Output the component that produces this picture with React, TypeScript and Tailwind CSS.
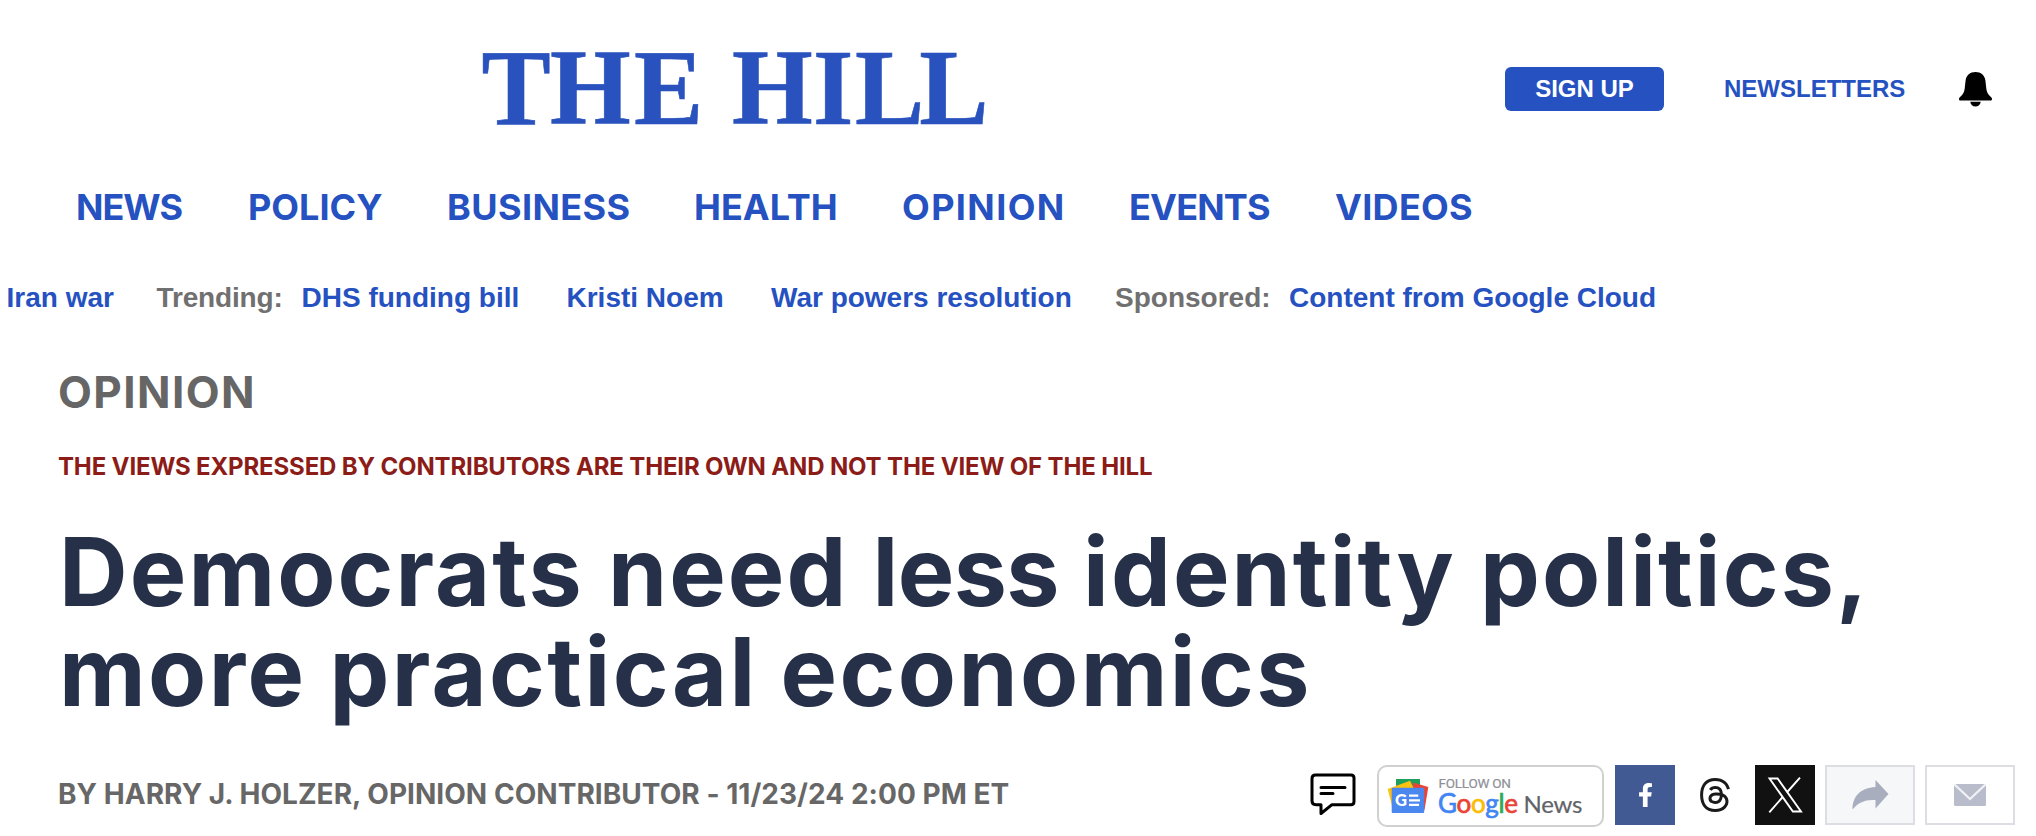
import React from 'react'
import { FaFacebookF } from 'react-icons/fa'
import { SiThreads } from 'react-icons/si'

interface NavItem {
  label: string
  className: string
}

const navItems: NavItem[] = [
  { label: 'News', className: 'w-[172px] tracking-[-1px]' },
  { label: 'Policy', className: 'w-[199px]' },
  { label: 'Business', className: 'w-[247px] tracking-[0.4px]' },
  { label: 'Health', className: 'w-[208px]' },
  { label: 'Opinion', className: 'w-[227px] tracking-[1.4px]' },
  { label: 'Events', className: 'w-[206px] tracking-[-0.8px]' },
  { label: 'Videos', className: 'tracking-[0.3px]' },
]

const Logo = () => (
  <svg width="510" height="150" viewBox="480 14 510 150" className="shrink-0 overflow-visible" role="img" aria-label="The Hill">
    <text
      transform="scale(0.965 1)"
      x="499 570 657 720 758.5 842.5 886 952.5"
      y="124"
      fontFamily='"Liberation Serif", serif'
      fontWeight="700"
      fontSize="107.500"
      fill="#2a52be"
      stroke="#2a52be"
      strokeWidth="0.600"
    >
      THE HILL
    </text>
  </svg>
)

const BellIcon = () => (
  <svg width="33" height="35" viewBox="0 0 33 35" fill="#000">
    <path d="M16.500 0C11 0 7.300 3.200 6.600 8.500L5.700 16.500C5.200 20.300 4.200 22.300 1.600 24.500C.5 25.400 0 26 0 27C0 28 .6 28.500 1.600 28.500H31.400C32.400 28.500 33 28 33 27C33 26 32.500 25.400 31.400 24.500C28.800 22.300 27.800 20.300 27.300 16.500L26.400 8.500C25.700 3.200 22 0 16.500 0Z" />
    <path d="M11.300 29.700H21.700C21.400 32.500 19.300 34.500 16.500 34.500C13.700 34.500 11.600 32.500 11.300 29.700Z" />
  </svg>
)

const CommentIcon = () => (
  <svg width="46" height="44" viewBox="0 0 46 44" fill="none" stroke="#000" strokeWidth="3" strokeLinejoin="round" strokeLinecap="round">
    <path d="M5.500 2H41C43 2 44 3 44 5V28.500C44 30.500 42.800 31.700 41 31.700H22L11 40.500V31.700H6C3.300 31.700 2 30.500 2 28V5.500C2 3 3.200 2 5.500 2Z" />
    <path d="M11 14.500H35M11 20.500H23" />
  </svg>
)

const GoogleNewsBadge = () => (
  <a className="mr-[11px] h-[62px] w-[227px] shrink-0 rounded-[10px] border-2 border-[#d0d0d0] bg-white">
    <svg width="223" height="58" viewBox="2 2 223 58">
      <path d="M19 14h24v14H19z" fill="#1f9f5a" />
      <path d="M36 17.500L51.300 22L47.500 45L36 40Z" fill="#ea4335" />
      <path d="M10.700 24L33 15.700L38 26L15 41Z" fill="#fdc110" />
      <rect x="14.700" y="22.700" width="32.500" height="25.300" rx="1" fill="#4a87ee" />
      <text x="18" y="41.300" fontFamily="Lato, sans-serif" fontWeight="900" fontSize="16.500" fill="#fff">
        G
      </text>
      <path d="M32 30.700h9.300M32 35.300h11M32 39.900h10" stroke="#fff" strokeWidth="2.200" />
      <text x="61.500" y="22.500" textLength="72.500" fontFamily="Roboto, sans-serif" fontSize="13.500" fill="#8e8f98" stroke="#8e8f98" strokeWidth="0.200">
        FOLLOW ON
      </text>
      <g fontFamily="Lato, sans-serif">
        <text x="61" y="48.400" fontSize="26" textLength="80" strokeWidth="0.700">
          <tspan fill="#4285f4" stroke="#4285f4">G</tspan>
          <tspan fill="#ea4335" stroke="#ea4335">o</tspan>
          <tspan fill="#fbbc05" stroke="#fbbc05">o</tspan>
          <tspan fill="#4285f4" stroke="#4285f4">g</tspan>
          <tspan fill="#34a853" stroke="#34a853">l</tspan>
          <tspan fill="#ea4335" stroke="#ea4335">e</tspan>
        </text>
        <text x="146.500" y="48.400" fontSize="24" textLength="59" fill="#5f6368" stroke="#5f6368" strokeWidth="0.200">
          News
        </text>
      </g>
    </svg>
  </a>
)

const XIcon = () => (
  <svg width="36" height="36" viewBox="0 0 36 36" fill="none" stroke="#fff" strokeWidth="1.900">
    <path d="M2.500 1.500H10.600L34 34.500H25.900Z" />
    <path d="M33 .6L19.800 15.500M15.700 20L2.300 35.300" />
  </svg>
)

const ShareArrowIcon = () => (
  <svg width="37" height="30" viewBox="0 0 37 30" fill="#a9aebf">
    <path d="M23.500 0L36.500 14L23.500 28.500V20C13 19.200 6 22.500 .5 29.500C.2 17 8.500 7.600 23.500 7Z" />
  </svg>
)

const MailIcon = () => (
  <svg width="32" height="22" viewBox="0 0 32 22">
    <rect width="32" height="22" rx="1.500" fill="#b8bccb" />
    <path d="M0 0L16 15L32 0" fill="none" stroke="#f1f2f5" strokeWidth="2.200" />
  </svg>
)

const ShareBar = () => (
  <div className="flex items-start">
    <a className="mt-[8px] mr-[21px]">
      <CommentIcon />
    </a>
    <GoogleNewsBadge />
    <a className="mr-[10px] flex h-[60px] w-[60px] items-center justify-center bg-[#425a93]">
      <FaFacebookF className="h-[24px] w-[15px] text-white" />
    </a>
    <a className="mr-[10px] flex h-[60px] w-[60px] items-center justify-center">
      <SiThreads className="h-[34px] w-[34px] text-[#1a1a1a]" />
    </a>
    <a className="mr-[10px] flex h-[60px] w-[60px] items-center justify-center bg-[#111]">
      <XIcon />
    </a>
    <a className="mr-[10px] flex h-[60px] w-[90px] items-center justify-center border-2 border-[#dcdee4] bg-[#f5f7f9]">
      <ShareArrowIcon />
    </a>
    <a className="flex h-[60px] w-[90px] items-center justify-center border-2 border-[#dcdee4] bg-white">
      <MailIcon />
    </a>
  </div>
)

export default function App() {
  return (
    <div className="h-[836px] w-[2036px] overflow-hidden bg-white font-[Inter,sans-serif]">
      <header className="font-[Liberation_Sans,Arial,sans-serif] text-[#2551c1]">
        <div className="flex h-[178px] items-center pl-[480px]">
          <Logo />
          <div className="ml-[515px] flex items-center text-[24px] font-bold">
            <a className="flex h-[44px] w-[159px] items-center justify-center rounded-[6px] bg-[#2551c1] text-white">
              SIGN UP
            </a>
            <a className="ml-[60px] w-[235px]">NEWSLETTERS</a>
            <BellIcon />
          </div>
        </div>

        <nav className="flex h-[58px] items-center pl-[76px] font-[Inter,sans-serif] text-[36px] font-bold whitespace-nowrap uppercase">
          {navItems.map((item) => (
            <a key={item.label} className={item.className}>
              {item.label}
            </a>
          ))}
        </nav>

        <div className="flex h-[122px] items-center pt-[2px] pl-[6.5px] text-[28px] font-bold whitespace-nowrap">
          <a className="w-[150px]">Iran war</a>
          <span className="w-[145px] tracking-[-0.15px] text-[#707070]">Trending:</span>
          <a className="w-[265px]">DHS funding bill</a>
          <a className="w-[204.5px]">Kristi Noem</a>
          <a className="w-[344px]">War powers resolution</a>
          <span className="w-[174px] text-[#707070]">Sponsored:</span>
          <a>Content from Google Cloud</a>
        </div>
      </header>

      <main className="pl-[58px]">
        <p className="text-[44px] leading-[68px] font-bold tracking-[1.4px] text-[#666]">OPINION</p>
        <p className="pt-px text-[24px] leading-[80px] font-bold tracking-[-0.15px] text-[#8c1c18]">
          THE VIEWS EXPRESSED BY CONTRIBUTORS ARE THEIR OWN AND NOT THE VIEW OF THE HILL
        </p>
        <h1 className="mt-[15px] text-[95px] leading-[100px] font-bold whitespace-nowrap text-[#263149]">
          <span className="block pl-px tracking-[2.1px] [word-spacing:-0.5px]">
            Democrats need <span className="tracking-[-0.6px]">less</span> identity politics,
          </span>
          <span className="block pl-px tracking-[2.4px] [word-spacing:-2px]">more practical economics</span>
        </h1>

        {/* Byline and share links */}
        <div className="mt-[43px] flex items-start">
          <p className="w-[1252px] text-[28px] leading-[58px] font-bold tracking-[0.04px] text-[#676767]">
            BY HARRY J. HOLZER, OPINION CONTRIBUTOR - 11/23/24 2:00 PM ET
          </p>
          <ShareBar />
        </div>
      </main>
    </div>
  )
}
